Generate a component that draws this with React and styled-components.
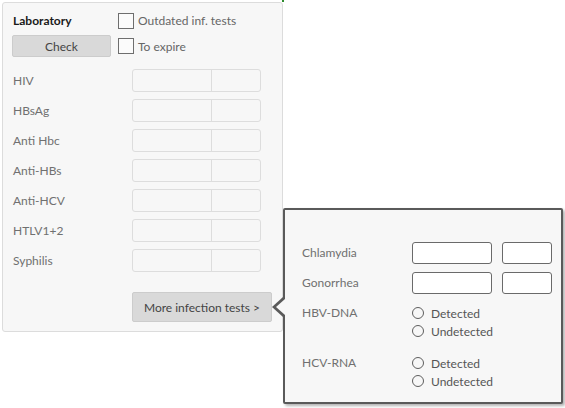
import React from 'react'
import styled, { createGlobalStyle } from 'styled-components'

const FONT = `Lato, "Open Sans", sans-serif`

const GlobalStyle = createGlobalStyle`
  html, body {
    margin: 0;
    padding: 0;
    background: #ffffff;
  }
  body {
    font-family: ${FONT};
    font-size: 12px;
  }
`

const Page = styled.div`
  position: relative;
  width: 565px;
  height: 408px;
  padding: 2px 0 0 2px;
  box-sizing: border-box;
`

const Panel = styled.div`
  width: 281px;
  height: 330px;
  box-sizing: border-box;
  background: #f7f7f7;
  border: 1px solid #dcdcdc;
  border-radius: 3px;
  padding: 9px 0 0 9px;
`

const Header = styled.div`
  display: grid;
  grid-template-columns: 99px auto;
  grid-template-rows: 17px 22px;
  column-gap: 7px;
  row-gap: 6px;
  align-items: center;
`

const Title = styled.div`
  font-weight: bold;
  color: #1a1a1a;
  padding-left: 1px;
`

const Button = styled.button`
  font-family: ${FONT};
  font-size: 12px;
  color: #444;
  background: #d9d9d9;
  border: 1px solid #cccccc;
  border-radius: 2px;
  padding: 0;
  height: ${props => props.height || '22px'};
  width: ${props => props.width || '99px'};
`

const CheckLabel = styled.label`
  display: flex;
  align-items: center;
  gap: 4px;
  color: #666;
`

const Box = styled.span`
  width: 16px;
  height: 16px;
  box-sizing: border-box;
  border: 1px solid #6e6e6e;
  background: #fbfbfb;
`

const Rows = styled.div`
  display: grid;
  grid-template-columns: 120px 129px;
  grid-auto-rows: 23px;
  row-gap: 7px;
  margin-top: 12px;
  align-items: center;
`

const Label = styled.div`
  color: ${props => props.color || '#707070'};
  padding-left: 1px;
`

const Split = styled.div`
  display: flex;
  height: 23px;
  border: 1px solid #dddddd;
  border-radius: 3px;
  box-sizing: border-box;
`

const Cell = styled.div`
  width: ${props => props.width};
  border-left: ${props => (props.divider ? '1px solid #dddddd' : 'none')};
`

const Footer = styled.div`
  display: flex;
  padding-left: 120px;
  margin-top: 20px;
`

const Popover = styled.div`
  position: absolute;
  left: 283px;
  top: 208px;
  width: 280px;
  height: 196px;
  box-sizing: border-box;
  background: #f7f7f7;
  border: 2px solid #5a5a5a;
  border-radius: 2px;
  box-shadow: 2px 2px 3px rgba(0, 0, 0, 0.3);
  padding: 32px 0 0 17px;

  &::before,
  &::after {
    content: '';
    position: absolute;
    width: 0;
    height: 0;
    border-style: solid;
    border-color: transparent;
  }
  &::before {
    left: -13px;
    top: 87px;
    border-width: 10px 11px 10px 0;
    border-right-color: #5a5a5a;
  }
  &::after {
    left: -9px;
    top: 89px;
    border-width: 8px 9px 8px 0;
    border-right-color: #f7f7f7;
  }
`

const PopGrid = styled.div`
  display: grid;
  grid-template-columns: 110px auto;
  row-gap: 8px;
  align-items: start;
`

const PopLabel = styled.div`
  color: #707070;
  line-height: ${props => props.lh || '22px'};
  margin-top: ${props => props.mt || '0'};
`

const Inputs = styled.div`
  display: flex;
  gap: 10px;
`

const Input = styled.div`
  width: ${props => props.width};
  height: 22px;
  box-sizing: border-box;
  background: #ffffff;
  border: 1px solid #6a6a6a;
  border-radius: 3px;
`

const Radios = styled.div`
  display: flex;
  flex-direction: column;
  margin-top: ${props => props.mt || '0'};
`

const Radio = styled.label`
  display: flex;
  align-items: center;
  gap: 7px;
  height: 18px;
  color: #555;
`

const Circle = styled.span`
  width: 12px;
  height: 12px;
  box-sizing: border-box;
  border: 1px solid #5e5e5e;
  border-radius: 50%;
`

const Dot = styled.span`
  position: absolute;
  left: 282px;
  top: 0;
  width: 2px;
  height: 2px;
  background: #2e8b2e;
`

const tests = ['HIV', 'HBsAg', 'Anti Hbc', 'Anti-HBs', 'Anti-HCV', 'HTLV1+2', 'Syphilis']

export default function App() {
  return (
    <Page>
      <GlobalStyle />
      <Dot />
      <Panel>
        <Header>
          <Title>Laboratory</Title>
          <CheckLabel><Box />Outdated inf. tests</CheckLabel>
          <Button>Check</Button>
          <CheckLabel><Box />To expire</CheckLabel>
        </Header>
        <Rows>
          {tests.map(t => (
            <React.Fragment key={t}>
              <Label>{t}</Label>
              <Split>
                <Cell width="79px" />
                <Cell width="49px" divider />
              </Split>
            </React.Fragment>
          ))}
        </Rows>
        <Footer>
          <Button width="140px" height="30px">More infection tests &gt;</Button>
        </Footer>
      </Panel>
      <Popover>
        <PopGrid>
          <PopLabel>Chlamydia</PopLabel>
          <Inputs><Input width="80px" /><Input width="50px" /></Inputs>
          <PopLabel>Gonorrhea</PopLabel>
          <Inputs><Input width="80px" /><Input width="50px" /></Inputs>
          <PopLabel lh="18px" mt="2px">HBV-DNA</PopLabel>
          <Radios mt="2px">
            <Radio><Circle />Detected</Radio>
            <Radio><Circle />Undetected</Radio>
          </Radios>
          <PopLabel lh="18px" mt="6px">HCV-RNA</PopLabel>
          <Radios mt="6px">
            <Radio><Circle />Detected</Radio>
            <Radio><Circle />Undetected</Radio>
          </Radios>
        </PopGrid>
      </Popover>
    </Page>
  )
}
